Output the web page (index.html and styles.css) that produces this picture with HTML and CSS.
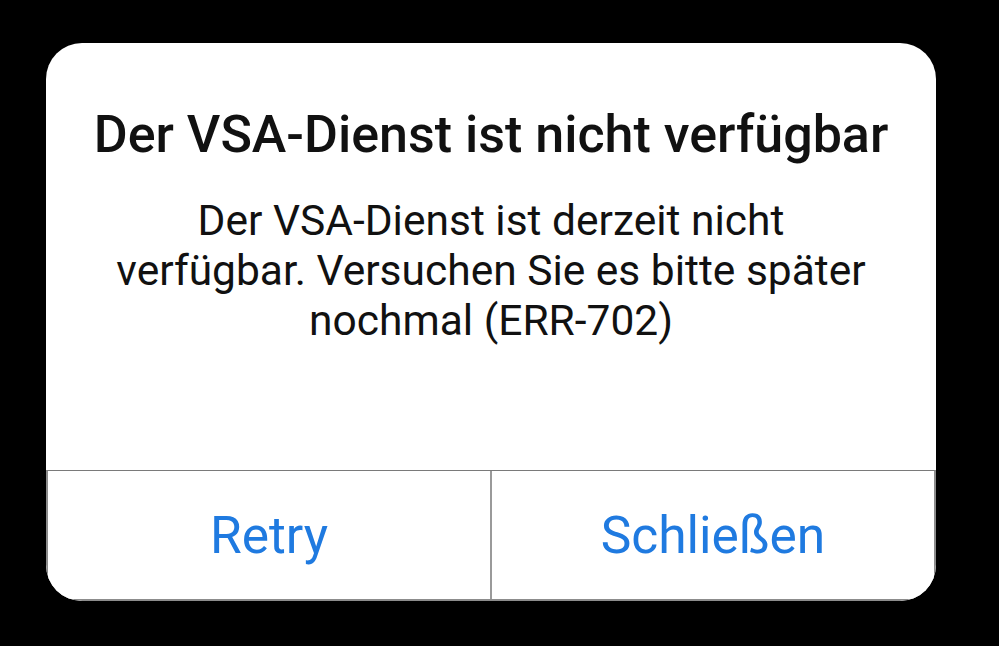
FILE: index.html
```html
<!DOCTYPE html>
<html lang="de">
<head>
<meta charset="utf-8">
<title>VSA-Dienst</title>
<link rel="stylesheet" href="styles.css">
</head>
<body>
  <div class="dialog">
    <div class="content">
      <h1 class="title">Der VSA-Dienst ist nicht verfügbar</h1>
      <p class="message">Der VSA-Dienst ist derzeit nicht verfügbar. Versuchen Sie es bitte später nochmal (ERR-702)</p>
    </div>
    <div class="actions">
      <button class="action">Retry</button>
      <button class="action action-right">Schließen</button>
    </div>
  </div>
</body>
</html>
```
FILE: styles.css
```css
html, body {
  margin: 0;
  padding: 0;
  background: #000;
  width: 999px;
  height: 646px;
  overflow: hidden;
}
body {
  padding: 43px 0 0 46px;
  box-sizing: border-box;
  font-family: Roboto, "Noto Sans", "Liberation Sans", sans-serif;
}
.dialog {
  width: 890px;
  height: 558px;
  background: #fff;
  border-radius: 36px;
  overflow: hidden;
  display: flex;
  flex-direction: column;
}
.content {
  flex: 1;
  display: flex;
  flex-direction: column;
  align-items: center;
  padding-top: 61px;
  text-align: center;
}
.title {
  margin: 0;
  font-size: 52px;
  font-weight: 500;
  line-height: 62px;
  color: #111;
  white-space: nowrap;
}
.message {
  margin: 30px 0 0;
  width: 764px;
  font-size: 42.5px;
  line-height: 50px;
  color: #111;
  font-weight: 400;
}
.actions {
  height: 131px;
  display: flex;
  box-sizing: border-box;
  border: 2px solid #8c8c8c;
  border-top: 1.5px solid #7a7a7a;
  border-radius: 0 0 36px 36px;
}
.action {
  flex: 1;
  border: none;
  background: #fff;
  margin: 0;
  padding: 0;
  font-family: inherit;
  font-size: 51.5px;
  color: #1f7ae0;
  display: flex;
  align-items: center;
  justify-content: center;
}
.action-right {
  border-left: 2px solid #9a9a9a;
}
```
